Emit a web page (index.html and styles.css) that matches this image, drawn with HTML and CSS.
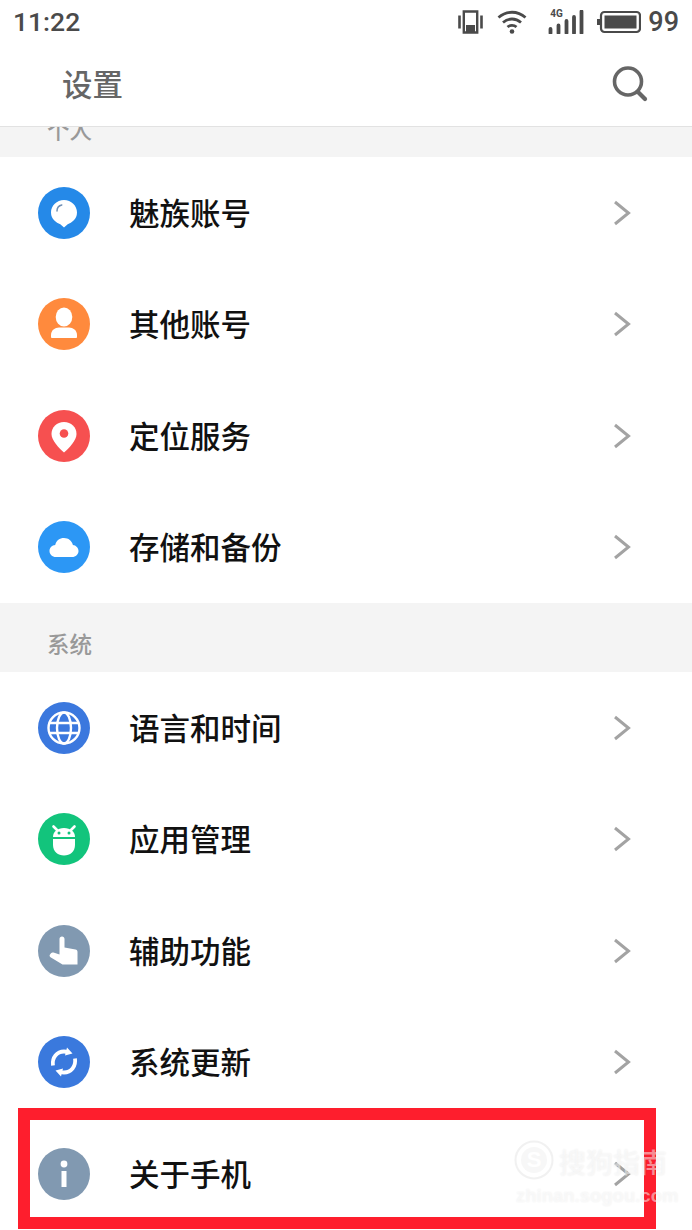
FILE: index.html
```html
<!DOCTYPE html>
<html lang="zh-CN">
<head>
<meta charset="utf-8">
<title>设置</title>
<link rel="stylesheet" href="styles.css">
</head>
<body>
<div class="phone">
  <header class="top">
    <div class="status">
      <span class="time">11:22</span>
      <div class="status-icons">
        <svg class="si-vib" viewBox="0 0 25 24" width="25" height="24"><path d="M1.500 5.500v13M23.500 5.500v13" stroke="#4a4a4a" stroke-width="2.600" fill="none"/><path d="M5.800 1.500h13.400v21H5.800z" fill="none" stroke="#4a4a4a" stroke-width="2.400"/><path d="M8 15h9v7H8z" fill="#4a4a4a"/></svg>
        <svg class="si-wifi" viewBox="0 0 30 26" width="30" height="26"><path d="M1.500 8.500C9.500 1.500 20.500 1.500 28.500 8.500M6 13.500C11.500 8.800 18.500 8.800 24 13.500M10.500 18C13 15.800 17 15.800 19.500 18" stroke="#4a4a4a" stroke-width="2.800" fill="none"/><circle cx="15" cy="22.500" r="2.300" fill="#4a4a4a"/></svg>
        <div class="signal">
          <span class="g4">4G</span>
          <svg viewBox="0 0 36 24" width="36" height="24"><path d="M2.500 19v4M10.500 15.500v7.500M18.500 11v12M26 7v16M33.500 1.500v21.500" stroke="#4a4a4a" stroke-width="3.800" fill="none" stroke-linecap="round"/></svg>
        </div>
        <svg class="si-bat" viewBox="0 0 44 24" width="44" height="24"><path d="M0 9h3v6H0z" fill="#4a4a4a"/><rect x="4" y="2" width="39" height="20" rx="3.500" fill="none" stroke="#4a4a4a" stroke-width="2.200"/><rect x="7.500" y="5.500" width="32" height="13" fill="#4a4a4a"/></svg>
        <span class="pct">99</span>
      </div>
    </div>
    <div class="titlebar">
      <h1 class="title">设置</h1>
      <svg class="search" viewBox="0 0 36 36" width="36" height="36"><circle cx="16" cy="15.500" r="13.500" fill="none" stroke="#666" stroke-width="3.600"/><path d="M26 26l7 7" stroke="#666" stroke-width="4.200" stroke-linecap="round"/></svg>
    </div>
  </header>

  <div class="section clipped"><span class="section-label">个人</span></div>
  <ul class="list">
    <li class="row">
      <svg class="icon" viewBox="0 0 52 52"><circle cx="26" cy="26" r="26" fill="#2589e8"/><path d="M26 13c7.200 0 13 5.700 13 12.600 0 6.800-5.300 10.200-9.300 11.600L26 40.500l-3.700-3.300C18.300 35.800 13 32.400 13 25.600 13 18.700 18.800 13 26 13z" fill="#fff"/><path d="M19 24c0-3 2-5.400 4.800-6" fill="none" stroke="#6f8fb5" stroke-width="1.500" stroke-linecap="round"/></svg>
      <span class="label">魅族账号</span>
      <svg class="chev" viewBox="0 0 18 26"><path d="M2 2l13.500 11L2 24" fill="none" stroke="#a3a3a3" stroke-width="3"/></svg>
    </li>
    <li class="row">
      <svg class="icon" viewBox="0 0 52 52"><circle cx="26" cy="26" r="26" fill="#ff8a3d"/><ellipse cx="26" cy="19" rx="8.300" ry="9.500" fill="#fff"/><path d="M13 39v-2c0-4.600 4-7.500 8-7.500h10c4 0 8 2.900 8 7.500v2c0 .5-.5 1-1 1H14c-.5 0-1-.5-1-1z" fill="#fff"/></svg>
      <span class="label">其他账号</span>
      <svg class="chev" viewBox="0 0 18 26"><path d="M2 2l13.500 11L2 24" fill="none" stroke="#a3a3a3" stroke-width="3"/></svg>
    </li>
    <li class="row">
      <svg class="icon" viewBox="0 0 52 52"><circle cx="26" cy="26" r="26" fill="#f65050"/><path d="M26 12c7.200 0 12.500 5.300 12.500 12 0 6.500-7.500 14-12.500 18.500C21 38 13.500 30.500 13.500 24c0-6.700 5.300-12 12.500-12z" fill="#fff"/><circle cx="26" cy="23.500" r="4.300" fill="#f65050"/></svg>
      <span class="label">定位服务</span>
      <svg class="chev" viewBox="0 0 18 26"><path d="M2 2l13.500 11L2 24" fill="none" stroke="#a3a3a3" stroke-width="3"/></svg>
    </li>
    <li class="row">
      <svg class="icon" viewBox="0 0 52 52"><circle cx="26" cy="26" r="26" fill="#2c97f5"/><path d="M18 36c-3.800 0-6.500-2.700-6.500-6 0-3.200 2.500-5.800 5.700-6 1-4.500 4.500-7 8.800-7 4.400 0 8 2.800 8.900 7.100 3 .3 5.600 2.800 5.600 5.900 0 3.300-2.700 6-6.500 6z" fill="#fff"/></svg>
      <span class="label">存储和备份</span>
      <svg class="chev" viewBox="0 0 18 26"><path d="M2 2l13.500 11L2 24" fill="none" stroke="#a3a3a3" stroke-width="3"/></svg>
    </li>
  </ul>

  <div class="section"><span class="section-label">系统</span></div>
  <ul class="list">
    <li class="row">
      <svg class="icon" viewBox="0 0 52 52"><circle cx="26" cy="26" r="26" fill="#3b78de"/><g fill="none" stroke="#fff" stroke-width="2.400"><circle cx="26" cy="26" r="15.500"/><ellipse cx="26" cy="26" rx="7" ry="15.500"/><path d="M11.500 21h29M11.500 31h29"/></g></svg>
      <span class="label">语言和时间</span>
      <svg class="chev" viewBox="0 0 18 26"><path d="M2 2l13.500 11L2 24" fill="none" stroke="#a3a3a3" stroke-width="3"/></svg>
    </li>
    <li class="row">
      <svg class="icon" viewBox="0 0 52 52"><circle cx="26" cy="26" r="26" fill="#12c47c"/><path d="M15.500 13.500l3.500 3.500M36.500 13.500L33 17" stroke="#fff" stroke-width="2.600" stroke-linecap="round"/><path d="M15 24c0-5.500 4.500-9 11-9s11 3.500 11 9z" fill="#fff"/><circle cx="21" cy="20" r="1.500" fill="#12c47c"/><circle cx="31" cy="20" r="1.500" fill="#12c47c"/><path d="M15 26h22v6c0 6.500-5 10.500-11 10.500S15 38.500 15 32z" fill="#fff"/></svg>
      <span class="label">应用管理</span>
      <svg class="chev" viewBox="0 0 18 26"><path d="M2 2l13.500 11L2 24" fill="none" stroke="#a3a3a3" stroke-width="3"/></svg>
    </li>
    <li class="row">
      <svg class="icon" viewBox="0 0 52 52"><circle cx="26" cy="26" r="26" fill="#8199b1"/><path d="M21.500 14c0-1.500 1-2.500 2.500-2.500s2.500 1 2.500 2.500v8.500l11 2c1.200.2 2 1.200 2 2.400V39.500H24.500l-12-7.300c-1-.7-1.200-1.800-.5-2.700l1-1.300c.6-.8 1.600-.9 2.500-.6l6 2z" fill="#fff"/></svg>
      <span class="label">辅助功能</span>
      <svg class="chev" viewBox="0 0 18 26"><path d="M2 2l13.500 11L2 24" fill="none" stroke="#a3a3a3" stroke-width="3"/></svg>
    </li>
    <li class="row">
      <svg class="icon" viewBox="0 0 52 52"><circle cx="26" cy="26" r="26" fill="#3a79dd"/><g fill="none" stroke="#fff" stroke-width="3.800"><path d="M15 29.500C13.800 21.500 19 15.500 26 15.500c1.400 0 2.700.2 3.900.7"/><path d="M37 22.500C38.200 30.500 33 36.500 26 36.500c-1.400 0-2.700-.2-3.900-.7"/></g><path d="M29 11.500l5.500 6-7.500 2zM23 40.500l-5.500-6 7.500-2z" fill="#fff"/></svg>
      <span class="label">系统更新</span>
      <svg class="chev" viewBox="0 0 18 26"><path d="M2 2l13.500 11L2 24" fill="none" stroke="#a3a3a3" stroke-width="3"/></svg>
    </li>
    <li class="row">
      <svg class="icon" viewBox="0 0 52 52"><circle cx="26" cy="26" r="26" fill="#8199b1"/><circle cx="26" cy="16" r="3.400" fill="#fff"/><path d="M23.500 23h5v16h-5z" fill="#fff"/></svg>
      <span class="label">关于手机</span>
      <svg class="chev" viewBox="0 0 18 26"><path d="M2 2l13.500 11L2 24" fill="none" stroke="#a3a3a3" stroke-width="3"/></svg>
    </li>
  </ul>

  <div class="highlight"></div>
  <div class="watermark">
    <svg class="wm-logo" viewBox="0 0 40 40"><circle cx="20" cy="20" r="18.500" fill="none" stroke="#ececec" stroke-width="2"/><circle cx="20" cy="20" r="13" fill="#f5f5f5"/><text x="20" y="27" text-anchor="middle" class="wm-s">S</text></svg>
    <span class="wm-name">搜狗指南</span>
    <span class="wm-url">zhinan.sogou.com</span>
  </div>
</div>
</body>
</html>
```

FILE: styles.css
```css
* { box-sizing: border-box; }
html, body { margin: 0; padding: 0; }
body {
  background: #fff;
  font-family: "Noto Sans CJK SC", "Noto Sans", sans-serif;
}
.phone {
  position: relative;
  width: 692px;
  height: 1230px;
  overflow: hidden;
  background: #fff;
}
.top {
  height: 127px;
  border-bottom: 1px solid #e2e2e2;
  background: #fff;
}
.status {
  height: 43px;
  display: flex;
  align-items: center;
  justify-content: space-between;
  padding: 0 13px 0 13px;
  color: #4a4a4a;
  font-family: Roboto, "Noto Sans", sans-serif;
  font-weight: 500;
  font-size: 26.500px;
}
.status-icons {
  display: flex;
  align-items: center;
}
.si-vib { margin-right: 14px; }
.si-wifi { margin-right: 21px; }
.signal { position: relative; width: 36px; height: 24px; margin-right: 13px; }
.signal svg { display: block; }
.g4 {
  position: absolute;
  left: 2px;
  top: -2px;
  font-size: 10px;
  line-height: 11px;
  font-weight: 700;
}
.si-bat { margin-right: 7px; }
.pct { font-size: 27px; }
.titlebar {
  height: 83px;
  display: flex;
  align-items: center;
  justify-content: space-between;
  padding: 0 44px 2px 62px;
}
.title {
  margin: 0;
  padding-bottom: 2px;
  font-size: 30.500px;
  line-height: 40px;
  font-weight: 500;
  color: #666;
}
.search { display: block; }
.section {
  height: 69px;
  background: #f4f4f4;
  padding: 27px 0 0 47px;
  overflow: hidden;
}
.section.clipped {
  height: 30px;
  padding-top: 0;
}
.section-label {
  display: block;
  font-size: 22.500px;
  line-height: 26px;
  font-weight: 500;
  color: #999;
}
.clipped .section-label { margin-top: -11px; }
.list { list-style: none; margin: 0; padding: 0; }
.row {
  height: 111.500px;
  display: flex;
  align-items: center;
  padding: 0 61px 0 38px;
}
.icon { width: 52px; height: 52px; flex: none; }
.label {
  margin-left: 39px;
  padding-bottom: 2px;
  font-size: 30.500px;
  line-height: 40px;
  font-weight: 500;
  color: #111;
}
.chev { width: 18px; height: 26px; margin-left: auto; flex: none; }
.highlight {
  position: absolute;
  left: 18px;
  top: 1108px;
  width: 638px;
  height: 121px;
  border: 12px solid #fe1e2d;
}
.watermark {
  position: absolute;
  left: 514px;
  top: 1140px;
  width: 160px;
  height: 66px;
}
.wm-logo { position: absolute; left: 0; top: 0; width: 40px; height: 40px; opacity: .7; }
.wm-s { font-family: "Liberation Sans", sans-serif; font-size: 22px; font-weight: 700; fill: #fff; }
.wm-name {
  position: absolute;
  left: 45px;
  top: 6px;
  font-size: 27px;
  line-height: 32px;
  font-weight: 500;
  white-space: nowrap;
  color: rgba(255, 255, 255, .5);
  text-shadow: 0 0 2px rgba(0, 0, 0, .08);
}
.wm-url {
  position: absolute;
  left: 2px;
  top: 46px;
  font-family: "Liberation Sans", sans-serif;
  font-size: 18.500px;
  line-height: 20px;
  font-weight: 700;
  white-space: nowrap;
  color: rgba(255, 255, 255, .5);
  text-shadow: 0 0 2px rgba(0, 0, 0, .07);
}
```
